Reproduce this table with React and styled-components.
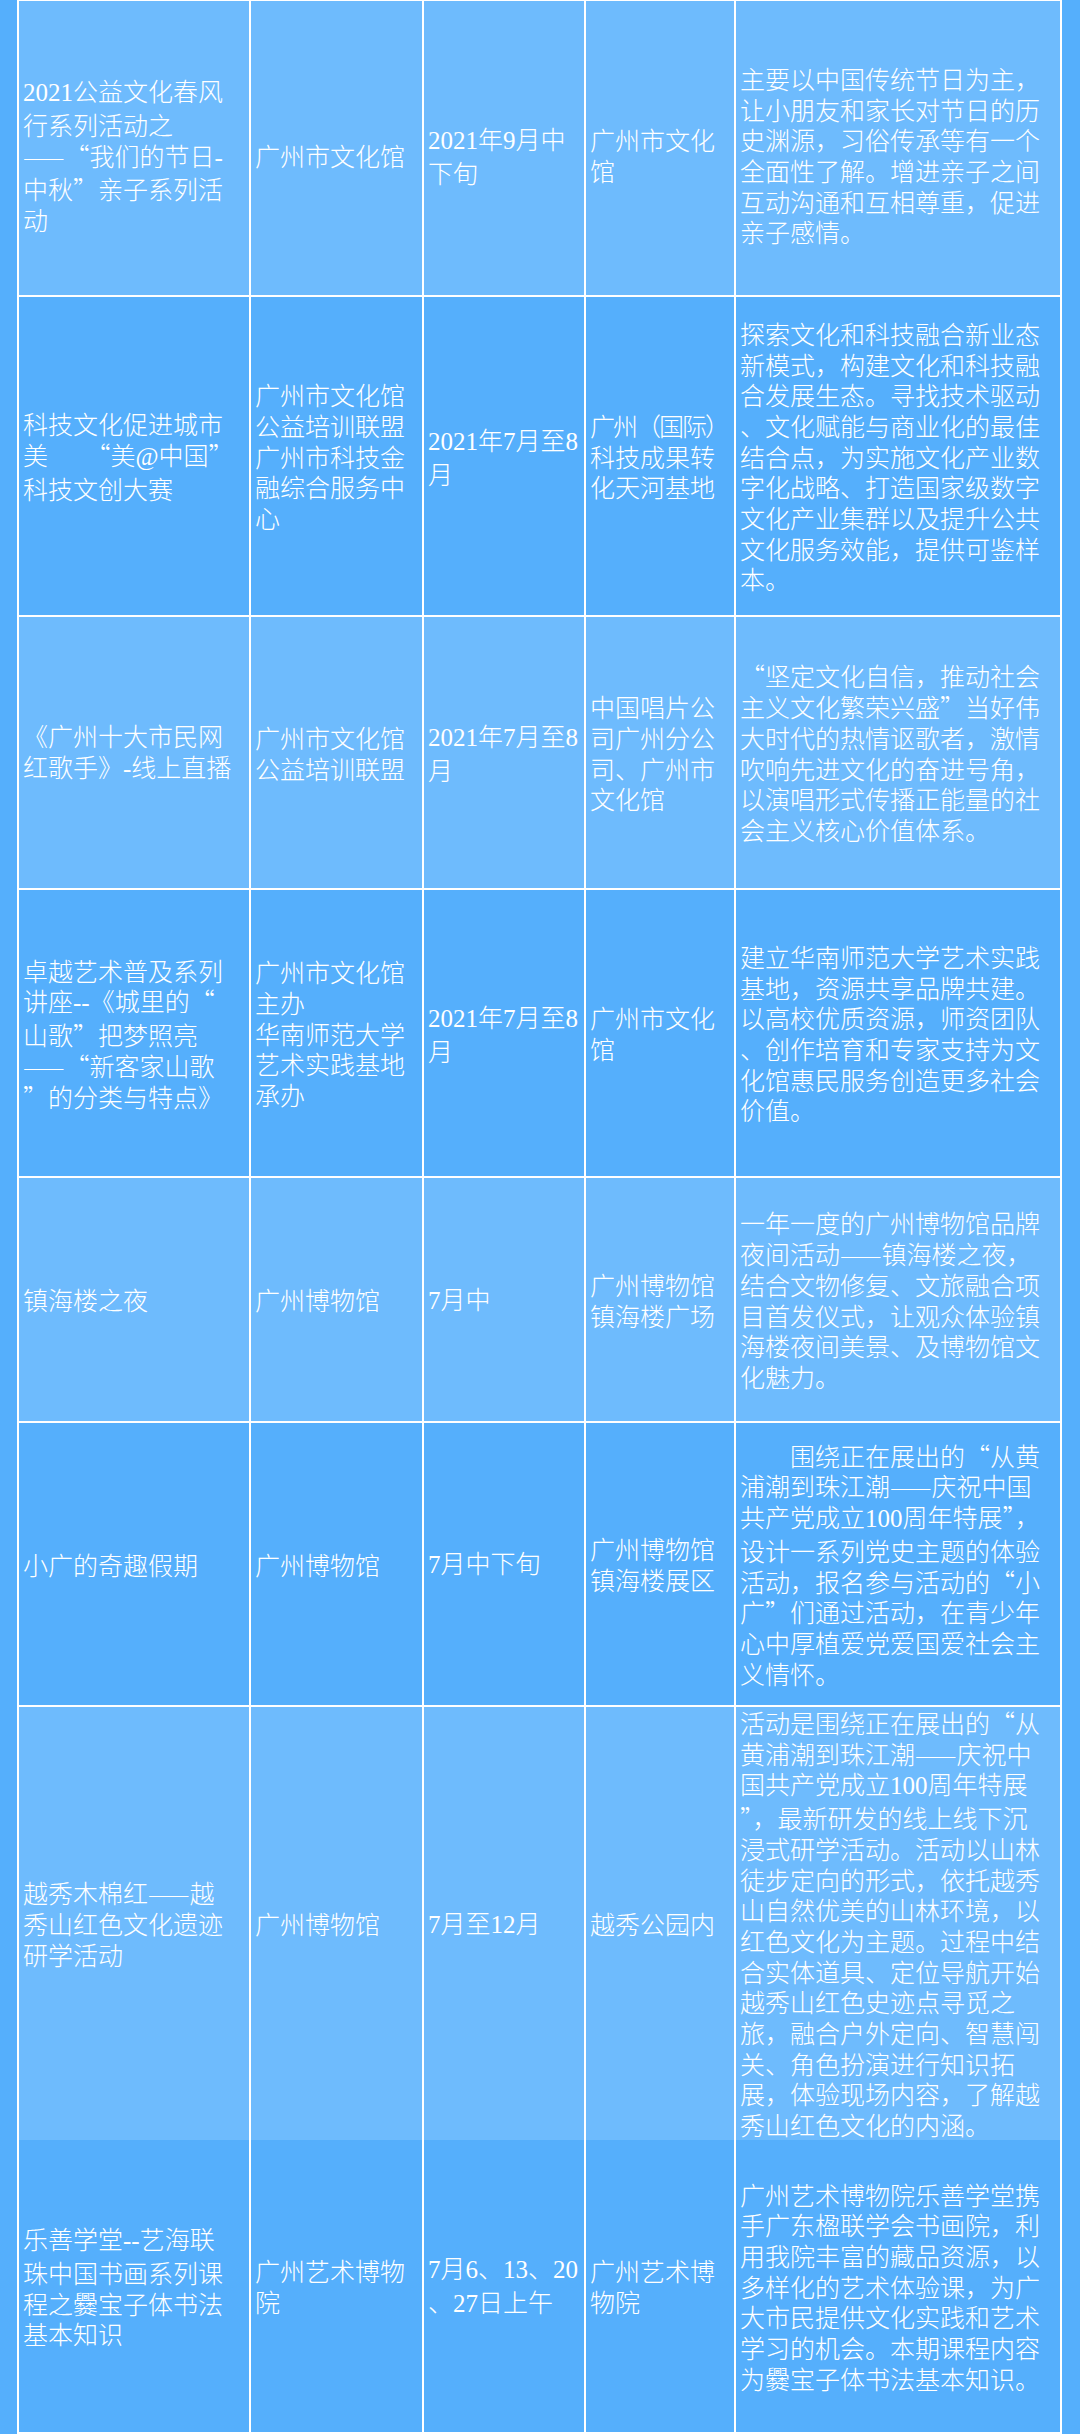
import React from "react";
import styled, { createGlobalStyle } from "styled-components";

const GlobalStyle = createGlobalStyle`
  html, body {
    margin: 0;
    padding: 0;
    background: #55affc;
  }
  body {
    font-family: "Noto Sans CJK SC", "Liberation Serif", sans-serif;
  }
  #root {
    width: 1080px;
    min-height: 2434px;
  }
`;

const Page = styled.div`
  width: 1080px;
  height: 2434px;
  overflow: hidden;
  background: #55affc;
`;

const Table = styled.div`
  margin-left: 17px;
  width: 1045px;
  box-sizing: border-box;
  padding: 1px 2px 2px 2px;
  background: #ffffff;
  display: flex;
  flex-direction: column;
  gap: 2px;
`;

const Row = styled.div`
  display: grid;
  grid-template-columns: 230px 171px 160px 148px 324px;
  column-gap: 2px;
  height: ${(p) => p.$h}px;
`;

const Cell = styled.div`
  background: ${(p) => (p.$light ? "#6ebbfd" : "#55affc")};
  box-sizing: border-box;
  padding: ${(p) => p.$offset || 0}px 4px 0 4px;
  display: flex;
  flex-direction: column;
  justify-content: center;
  color: #ffffff;
  font-family: "Noto Sans CJK SC", sans-serif;
  font-weight: 300;
  font-size: 25px;
  line-height: 30.7px;
  overflow: visible;
`;

const Line = styled.div`
  white-space: nowrap;
  letter-spacing: ${(p) => (p.$tight ? "-2px" : "0")};
`;

const Latin = styled.span`
  font-family: "Liberation Serif", serif;
  font-weight: 400;
`;

function Mixed({ text }) {
  const parts = text.split(/([0-9@\-]+)/);
  return parts.map((p, i) =>
    /^[0-9@\-]+$/.test(p) ? <Latin key={i}>{p}</Latin> : <React.Fragment key={i}>{p}</React.Fragment>
  );
}

const rows = [
  {
    light: true,
    h: 294,
    offset: 14,
    cells: [
      ["2021公益文化春风", "行系列活动之", "——“我们的节日-", "中秋”亲子系列活", "动"],
      ["广州市文化馆"],
      ["2021年9月中", "下旬"],
      ["广州市文化", "馆"],
      [
        "主要以中国传统节日为主，",
        "让小朋友和家长对节日的历",
        "史渊源，习俗传承等有一个",
        "全面性了解。增进亲子之间",
        "互动沟通和互相尊重，促进",
        "亲子感情。",
      ],
    ],
  },
  {
    light: false,
    h: 318,
    cells: [
      ["科技文化促进城市", "美\u3000\u3000“美@中国”", "科技文创大赛"],
      ["广州市文化馆", "公益培训联盟", "广州市科技金", "融综合服务中", "心"],
      ["2021年7月至8", "月"],
      [{ t: "广州（国际）", tight: true }, "科技成果转", "化天河基地"],
      [
        "探索文化和科技融合新业态",
        "新模式，构建文化和科技融",
        "合发展生态。寻找技术驱动",
        "、文化赋能与商业化的最佳",
        "结合点，为实施文化产业数",
        "字化战略、打造国家级数字",
        "文化产业集群以及提升公共",
        "文化服务效能，提供可鉴样",
        "本。",
      ],
    ],
  },
  {
    light: true,
    h: 271,
    cells: [
      ["《广州十大市民网", "红歌手》-线上直播"],
      ["广州市文化馆", "公益培训联盟"],
      ["2021年7月至8", "月"],
      ["中国唱片公", "司广州分公", "司、广州市", "文化馆"],
      [
        "“坚定文化自信，推动社会",
        "主义文化繁荣兴盛”当好伟",
        "大时代的热情讴歌者，激情",
        "吹响先进文化的奋进号角，",
        "以演唱形式传播正能量的社",
        "会主义核心价值体系。",
      ],
    ],
  },
  {
    light: false,
    h: 286,
    cells: [
      ["卓越艺术普及系列", "讲座--《城里的“", "山歌”把梦照亮", "——“新客家山歌", "”的分类与特点》"],
      ["广州市文化馆", "主办", "华南师范大学", "艺术实践基地", "承办"],
      ["2021年7月至8", "月"],
      ["广州市文化", "馆"],
      [
        "建立华南师范大学艺术实践",
        "基地，资源共享品牌共建。",
        "以高校优质资源，师资团队",
        "、创作培育和专家支持为文",
        "化馆惠民服务创造更多社会",
        "价值。",
      ],
    ],
  },
  {
    light: true,
    h: 243,
    cells: [
      ["镇海楼之夜"],
      ["广州博物馆"],
      ["7月中"],
      ["广州博物馆", "镇海楼广场"],
      [
        "一年一度的广州博物馆品牌",
        "夜间活动——镇海楼之夜，",
        "结合文物修复、文旅融合项",
        "目首发仪式，让观众体验镇",
        "海楼夜间美景、及博物馆文",
        "化魅力。",
      ],
    ],
  },
  {
    light: false,
    h: 282,
    cells: [
      ["小广的奇趣假期"],
      ["广州博物馆"],
      ["7月中下旬"],
      ["广州博物馆", "镇海楼展区"],
      [
        "\u3000\u3000围绕正在展出的“从黄",
        "浦潮到珠江潮——庆祝中国",
        "共产党成立100周年特展”，",
        "设计一系列党史主题的体验",
        "活动，报名参与活动的“小",
        "广”们通过活动，在青少年",
        "心中厚植爱党爱国爱社会主",
        "义情怀。",
      ],
    ],
  },
  {
    light: true,
    h: 431,
    cells: [
      ["越秀木棉红——越", "秀山红色文化遗迹", "研学活动"],
      ["广州博物馆"],
      ["7月至12月"],
      ["越秀公园内"],
      [
        "活动是围绕正在展出的“从",
        "黄浦潮到珠江潮——庆祝中",
        "国共产党成立100周年特展",
        "”，最新研发的线上线下沉",
        "浸式研学活动。活动以山林",
        "徒步定向的形式，依托越秀",
        "山自然优美的山林环境，以",
        "红色文化为主题。过程中结",
        "合实体道具、定位导航开始",
        "越秀山红色史迹点寻觅之",
        "旅，融合户外定向、智慧闯",
        "关、角色扮演进行知识拓",
        "展，体验现场内容，了解越",
        "秀山红色文化的内涵。",
      ],
    ],
  },
  {
    light: false,
    h: 292,
    cells: [
      ["乐善学堂--艺海联", "珠中国书画系列课", "程之爨宝子体书法", "基本知识"],
      ["广州艺术博物", "院"],
      ["7月6、13、20", "、27日上午"],
      ["广州艺术博", "物院"],
      [
        "广州艺术博物院乐善学堂携",
        "手广东楹联学会书画院，利",
        "用我院丰富的藏品资源，以",
        "多样化的艺术体验课，为广",
        "大市民提供文化实践和艺术",
        "学习的机会。本期课程内容",
        "为爨宝子体书法基本知识。",
      ],
    ],
  },
];

export default function App() {
  return (
    <Page>
      <GlobalStyle />
      <Table>
        {rows.map((row, ri) => (
          <Row key={ri} $h={row.h}>
            {row.cells.map((cell, ci) => (
              <Cell key={ci} $light={row.light} $offset={row.offset}>
                {cell.map((line, li) => {
                  const t = typeof line === "string" ? line : line.t;
                  const tight = typeof line === "string" ? false : line.tight;
                  return (
                    <Line key={li} $tight={tight}>
                      <Mixed text={t} />
                    </Line>
                  );
                })}
              </Cell>
            ))}
          </Row>
        ))}
      </Table>
    </Page>
  );
}
